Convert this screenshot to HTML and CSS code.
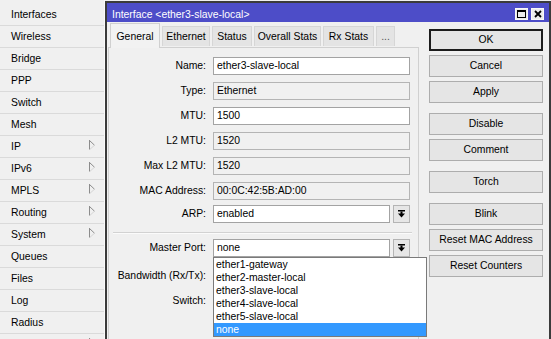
FILE: index.html
```html
<!DOCTYPE html>
<html>
<head>
<meta charset="utf-8">
<link rel="stylesheet" href="styles.css">
</head>
<body>
<div class="screen">
  <nav class="sidebar">
    <div class="side-item">Interfaces</div>
    <div class="side-item">Wireless</div>
    <div class="side-item">Bridge</div>
    <div class="side-item">PPP</div>
    <div class="side-item">Switch</div>
    <div class="side-item">Mesh</div>
    <div class="side-item">IP<svg class="sub-arrow" width="6" height="10" viewBox="0 0 6 10"><path d="M0.5 0 V9.5" stroke="#8c8c8c" fill="none"/><path d="M0.5 0.5 L5.5 5.2" stroke="#8c8c8c" fill="none"/><path d="M5.5 5.2 L1 9.3" stroke="#d4d4d4" fill="none"/></svg></div>
    <div class="side-item">IPv6<svg class="sub-arrow" width="6" height="10" viewBox="0 0 6 10"><path d="M0.5 0 V9.5" stroke="#8c8c8c" fill="none"/><path d="M0.5 0.5 L5.5 5.2" stroke="#8c8c8c" fill="none"/><path d="M5.5 5.2 L1 9.3" stroke="#d4d4d4" fill="none"/></svg></div>
    <div class="side-item">MPLS<svg class="sub-arrow" width="6" height="10" viewBox="0 0 6 10"><path d="M0.5 0 V9.5" stroke="#8c8c8c" fill="none"/><path d="M0.5 0.5 L5.5 5.2" stroke="#8c8c8c" fill="none"/><path d="M5.5 5.2 L1 9.3" stroke="#d4d4d4" fill="none"/></svg></div>
    <div class="side-item">Routing<svg class="sub-arrow" width="6" height="10" viewBox="0 0 6 10"><path d="M0.5 0 V9.5" stroke="#8c8c8c" fill="none"/><path d="M0.5 0.5 L5.5 5.2" stroke="#8c8c8c" fill="none"/><path d="M5.5 5.2 L1 9.3" stroke="#d4d4d4" fill="none"/></svg></div>
    <div class="side-item">System<svg class="sub-arrow" width="6" height="10" viewBox="0 0 6 10"><path d="M0.5 0 V9.5" stroke="#8c8c8c" fill="none"/><path d="M0.5 0.5 L5.5 5.2" stroke="#8c8c8c" fill="none"/><path d="M5.5 5.2 L1 9.3" stroke="#d4d4d4" fill="none"/></svg></div>
    <div class="side-item">Queues</div>
    <div class="side-item">Files</div>
    <div class="side-item">Log</div>
    <div class="side-item">Radius</div>
    <div class="side-item side-end"><svg class="sub-arrow" width="6" height="10" viewBox="0 0 6 10"><path d="M0.5 0 V9.5" stroke="#8c8c8c" fill="none"/><path d="M0.5 0.5 L5.5 5.2" stroke="#8c8c8c" fill="none"/><path d="M5.5 5.2 L1 9.3" stroke="#d4d4d4" fill="none"/></svg></div>
  </nav>

  <section class="window">
    <header class="titlebar">
      <span class="title">Interface &lt;ether3-slave-local&gt;</span>
      <span class="tb-btns">
        <span class="tb-btn"><svg width="9" height="8" viewBox="0 0 9 8"><rect x="0.5" y="0.5" width="8" height="7" fill="none" stroke="#000"/><rect x="0" y="0" width="9" height="2" fill="#000"/></svg></span>
        <span class="tb-btn"><svg width="8" height="8" viewBox="0 0 8 8"><path d="M1 1 L7 7 M7 1 L1 7" stroke="#000" stroke-width="1.8" fill="none"/></svg></span>
      </span>
    </header>

    <div class="wbody">
      <div class="main">
        <div class="tabs">
          <div class="tab active t-general">General</div>
          <div class="tab t-ethernet">Ethernet</div>
          <div class="tab t-status">Status</div>
          <div class="tab t-overall">Overall Stats</div>
          <div class="tab t-rx">Rx Stats</div>
          <div class="tab t-more">...</div>
        </div>
        <div class="panel">
          <div class="row"><span class="lbl">Name:</span><div class="field edit">ether3-slave-local</div></div>
          <div class="row"><span class="lbl">Type:</span><div class="field ro">Ethernet</div></div>
          <div class="row"><span class="lbl">MTU:</span><div class="field edit">1500</div></div>
          <div class="row"><span class="lbl">L2 MTU:</span><div class="field ro">1520</div></div>
          <div class="row"><span class="lbl">Max L2 MTU:</span><div class="field ro">1520</div></div>
          <div class="row"><span class="lbl">MAC Address:</span><div class="field ro">00:0C:42:5B:AD:00</div></div>
          <div class="row row-arp"><span class="lbl">ARP:</span><div class="field edit short">enabled</div><div class="dd-btn"><svg width="7" height="8" viewBox="0 0 7 8"><rect x="0" y="0" width="7" height="1.5" fill="#000"/><rect x="2.5" y="1.5" width="2" height="2.5" fill="#000"/><polygon points="0,3.5 7,3.5 3.5,7.5" fill="#000"/></svg></div></div>
          <div class="sep"></div>
          <div class="row row-master"><span class="lbl">Master Port:</span>
            <div class="combo">
              <div class="field edit short">none</div>
              <ul class="dd-list">
                <li>ether1-gateway</li>
                <li>ether2-master-local</li>
                <li>ether3-slave-local</li>
                <li>ether4-slave-local</li>
                <li>ether5-slave-local</li>
                <li class="sel">none</li>
              </ul>
            </div>
            <div class="dd-btn"><svg width="7" height="8" viewBox="0 0 7 8"><rect x="0" y="0" width="7" height="1.5" fill="#000"/><rect x="2.5" y="1.5" width="2" height="2.5" fill="#000"/><polygon points="0,3.5 7,3.5 3.5,7.5" fill="#000"/></svg></div>
          </div>
          <div class="row row-bw"><span class="lbl">Bandwidth (Rx/Tx):</span></div>
          <div class="row"><span class="lbl">Switch:</span></div>
        </div>
      </div>

      <div class="btncol">
        <div class="group">
          <div class="btn default">OK</div>
          <div class="btn">Cancel</div>
          <div class="btn">Apply</div>
        </div>
        <div class="group">
          <div class="btn">Disable</div>
          <div class="btn">Comment</div>
        </div>
        <div class="group">
          <div class="btn">Torch</div>
        </div>
        <div class="group">
          <div class="btn">Blink</div>
          <div class="btn">Reset MAC Address</div>
          <div class="btn">Reset Counters</div>
        </div>
      </div>
    </div>
  </section>
</div>
</body>
</html>
```

FILE: styles.css
```css
* { box-sizing: border-box; }
html, body { margin: 0; padding: 0; }
body {
  width: 551px;
  height: 339px;
  overflow: hidden;
  background: #f0f0f0;
  font-family: "Liberation Sans", Arial, sans-serif;
  font-size: 10.4px;
  color: #000;
}
.screen { display: flex; height: 339px; overflow: hidden; }

/* sidebar */
.sidebar {
  width: 105px;
  flex: none;
  padding-top: 4px;
  background: #f0f0f0;
  border-right: 1px solid #fafafa;
  overflow: hidden;
}
.side-item {
  height: 22px;
  border-bottom: 1px solid #dadada;
  display: flex;
  align-items: center;
  justify-content: space-between;
  padding: 1px 9px 0 11px;
  line-height: 18px;
  white-space: nowrap;
}
.side-end { justify-content: flex-end; }
.sub-arrow { margin-bottom: 4px; flex: none; }

/* window */
.window {
  flex: 1;
  margin-top: 1px;
  border: 2px solid #3b3b3b;
  border-bottom: none;
  background: #f0f0f0;
  display: flex;
  flex-direction: column;
  overflow: hidden;
}
.titlebar {
  height: 19px;
  flex: none;
  background: #4d4dc8;
  color: #fff;
  display: flex;
  justify-content: space-between;
  padding-left: 5px;
}
.title { padding-top: 6px; line-height: 12px; white-space: nowrap; }
.tb-btns { display: flex; gap: 3px; margin-right: 5px; margin-top: 5px; }
.tb-btn {
  width: 13px;
  height: 12px;
  background: #ececec;
  border: 1px solid #f8f8f8;
  display: flex;
  align-items: center;
  justify-content: center;
}

.wbody { flex: 1; display: flex; }
.main { margin-left: 1px; width: 311px; flex: none; display: flex; flex-direction: column; }

/* tabs */
.tabs {
  height: 24px;
  margin-top: 1px;
  padding-left: 2px;
  display: flex;
  align-items: flex-end;
  gap: 2px;
  flex: none;
}
.tab {
  height: 20px;
  margin-bottom: 1px;
  border: 1px solid #d6d6d6;
  border-bottom: none;
  background: #e4e4e4;
  text-align: center;
  line-height: 19px;
  white-space: nowrap;
}
.tab.active {
  height: 25px;
  margin-bottom: -1px;
  padding-top: 2px;
  line-height: 22px;
  background: #f2f2f2;
  border-color: #d0d0d0;
  position: relative;
  z-index: 1;
}
.t-general { width: 50px; }
.t-ethernet { width: 48px; }
.t-status { width: 40px; }
.t-overall { width: 67px; }
.t-rx { width: 51px; }
.t-more { width: 19px; color: #555; }

.panel {
  flex: 1;
  border: 1px solid #d0d0d0;
  border-bottom: none;
  background: #f0f0f0;
  padding-top: 6px;
}
.row {
  display: flex;
  align-items: flex-start;
  height: 25px;
  padding-top: 3px;
}
.row-arp { margin-top: -2px; }
.row-master { margin-top: 2px; }
.row-bw { margin-top: 3px; }
.lbl {
  width: 97px;
  flex: none;
  margin-right: 7px;
  text-align: right;
  line-height: 18px;
  white-space: nowrap;
}
.field {
  width: 197px;
  height: 18px;
  flex: none;
  border: 1px solid #a3a3a3;
  padding-left: 3px;
  line-height: 16px;
  white-space: nowrap;
  overflow: hidden;
}
.field.edit { background: #fff; }
.field.ro { background: #f0f0f0; border-color: #b4b4b4; }
.field.short { width: 177px; }
.dd-btn {
  width: 17px;
  height: 18px;
  margin-left: 3px;
  flex: none;
  border: 1px solid #b4b4b4;
  background: #e6e6e6;
  display: flex;
  align-items: center;
  justify-content: center;
}
.sep {
  height: 2px;
  margin: 5px 6px 0 4px;
  border-top: 1px solid #d2d2d2;
  border-bottom: 1px solid #fbfbfb;
}

/* dropdown */
.combo { position: relative; flex: none; }
.dd-list {
  position: absolute;
  top: 100%;
  left: 0;
  width: 214px;
  margin: 0;
  padding: 0;
  list-style: none;
  background: #fff;
  border: 1px solid #7a7a7a;
  z-index: 5;
}
.dd-list li {
  height: 13px;
  line-height: 13px;
  padding-left: 2px;
  white-space: nowrap;
}
.dd-list li.sel { background: #3399ff; color: #fff; }

/* buttons */
.btncol {
  margin-left: 10px;
  width: 114px;
  flex: none;
  padding-top: 7px;
  display: flex;
  flex-direction: column;
  gap: 10px;
}
.group { display: flex; flex-direction: column; gap: 4px; }
.btn {
  height: 22px;
  border: 1px solid #adadad;
  background: #e5e5e5;
  text-align: center;
  line-height: 20px;
  white-space: nowrap;
}
.btn.default { border: 2px solid #1c1c1c; line-height: 18px; }
```
